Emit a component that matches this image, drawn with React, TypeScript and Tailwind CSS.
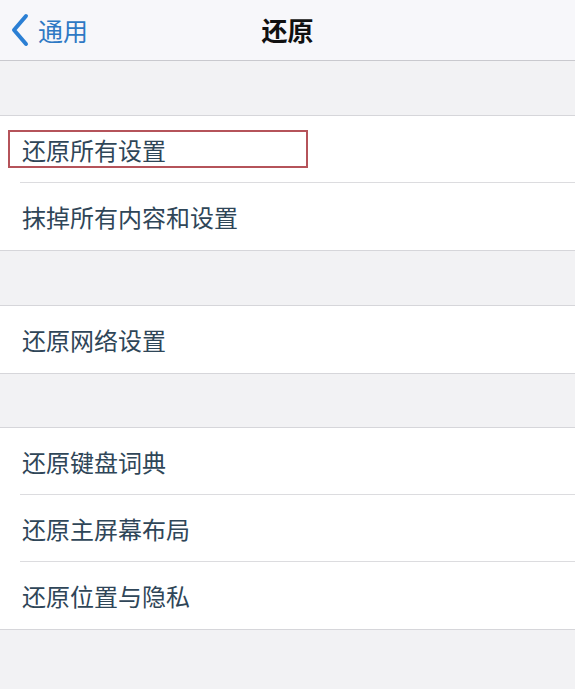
import React from "react";

const font = { fontFamily: '"Noto Sans CJK SC", "Noto Sans", sans-serif' };

function Row({ label, boxed, last }: { label: string; boxed?: boolean; last?: boolean }) {
  return (
    <div className="relative h-[67px] flex items-center pl-[22px]">
      <span className="text-[24px] leading-none text-[#2f4658]">{label}</span>
      {boxed && (
        <div className="absolute left-[8px] top-[14px] w-[300px] h-[38px] border-2 border-[#b5535a]" />
      )}
      {!last && <div className="absolute left-[20px] right-0 bottom-0 h-px bg-[#dcdcdf]" />}
    </div>
  );
}

function Group({ items, boxFirst }: { items: string[]; boxFirst?: boolean }) {
  return (
    <div className="bg-white border-y border-[#d6d6da]">
      {items.map((t, i) => (
        <Row key={t} label={t} boxed={boxFirst && i === 0} last={i === items.length - 1} />
      ))}
    </div>
  );
}

export default function App() {
  return (
    <div className="w-[575px] h-[689px] bg-[#f2f2f4] overflow-hidden" style={font}>
      <div className="relative h-[61px] bg-[#f7f7fa] border-b border-[#c9c9ce] flex items-center justify-center">
        <div className="absolute left-[10px] top-0 h-full flex items-center gap-[8px]">
          <svg width="20" height="34" viewBox="0 0 20 34">
            <path d="M16 3 L4 17 L16 31" fill="none" stroke="#2b7fd4" strokeWidth="4" strokeLinecap="round" strokeLinejoin="round" />
          </svg>
          <span className="text-[25px] leading-none text-[#2e79c4]">通用</span>
        </div>
        <span className="text-[26px] font-bold leading-none text-[#111]">还原</span>
      </div>
      <div className="h-[54px]" />
      <Group items={["还原所有设置", "抹掉所有内容和设置"]} boxFirst />
      <div className="h-[54px]" />
      <Group items={["还原网络设置"]} />
      <div className="h-[53px]" />
      <Group items={["还原键盘词典", "还原主屏幕布局", "还原位置与隐私"]} />
    </div>
  );
}
